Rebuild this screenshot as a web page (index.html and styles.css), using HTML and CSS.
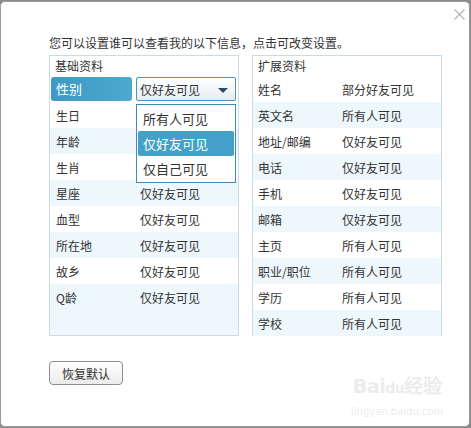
FILE: index.html
```html
<!DOCTYPE html>
<html lang="zh-CN">
<head>
<meta charset="utf-8">
<title>隐私设置</title>
<link rel="stylesheet" href="styles.css">
</head>
<body>
<div class="dialog">
  <svg class="close" width="11" height="11" viewBox="0 0 11 11"><path d="M0.5 0.5 L10.5 10.5 M10.5 0.5 L0.5 10.5" stroke="#b8b8b8" stroke-width="1.3" fill="none"/></svg>
  <div class="content">
    <p class="intro">您可以设置谁可以查看我的以下信息，点击可改变设置。</p>
    <div class="panels">
      <div class="panel panel-left">
        <div class="head">基础资料</div>
        <div class="row selected">
          <div class="label-box">性别</div>
          <div class="select">
            <span>仅好友可见</span>
            <span class="arrow"></span>
          </div>
        </div>
        <div class="row"><span class="k">生日</span><span class="v"></span></div>
        <div class="row alt"><span class="k">年龄</span><span class="v"></span></div>
        <div class="row"><span class="k">生肖</span><span class="v"></span></div>
        <div class="row alt"><span class="k">星座</span><span class="v">仅好友可见</span></div>
        <div class="row"><span class="k">血型</span><span class="v">仅好友可见</span></div>
        <div class="row alt"><span class="k">所在地</span><span class="v">仅好友可见</span></div>
        <div class="row"><span class="k">故乡</span><span class="v">仅好友可见</span></div>
        <div class="row alt"><span class="k">Q龄</span><span class="v">仅好友可见</span></div>
        <ul class="dropdown">
          <li>所有人可见</li>
          <li class="active">仅好友可见</li>
          <li>仅自己可见</li>
        </ul>
      </div>
      <div class="panel panel-right">
        <div class="head">扩展资料</div>
        <div class="row"><span class="k">姓名</span><span class="v">部分好友可见</span></div>
        <div class="row alt"><span class="k">英文名</span><span class="v">所有人可见</span></div>
        <div class="row"><span class="k">地址/邮编</span><span class="v">仅好友可见</span></div>
        <div class="row alt"><span class="k">电话</span><span class="v">仅好友可见</span></div>
        <div class="row"><span class="k">手机</span><span class="v">仅好友可见</span></div>
        <div class="row alt"><span class="k">邮箱</span><span class="v">仅好友可见</span></div>
        <div class="row"><span class="k">主页</span><span class="v">所有人可见</span></div>
        <div class="row alt"><span class="k">职业/职位</span><span class="v">所有人可见</span></div>
        <div class="row"><span class="k">学历</span><span class="v">所有人可见</span></div>
        <div class="row alt"><span class="k">学校</span><span class="v">所有人可见</span></div>
      </div>
    </div>
    <button class="reset">恢复默认</button>
  </div>
  <div class="watermark">
    <div class="wm-logo">Bai<span class="wm-du">du</span>经验</div>
    <div class="wm-url">jingyan.baidu.com</div>
  </div>
</div>
</body>
</html>
```
FILE: styles.css
```css
html, body {
  margin: 0;
  padding: 0;
}
body {
  background: #8c8c8c;
  width: 471px;
  height: 428px;
  padding: 1px 1px 0 0;
  box-sizing: border-box;
  font-family: "Noto Sans CJK SC", "Noto Sans", sans-serif;
  font-size: 12px;
  color: #333;
  overflow: hidden;
}
.dialog {
  position: relative;
  height: 426px;
  background: #fff;
  border: 1px solid #9a9a9a;
  border-radius: 5px;
  box-sizing: border-box;
}
.close {
  position: absolute;
  right: 4px;
  top: 7px;
}
.content {
  padding: 33px 0 0 48px;
}
.intro {
  margin: 0 0 4px 0;
  line-height: 16px;
  height: 16px;
  color: #333;
}
.panels {
  display: flex;
  gap: 13px;
}
.panel {
  position: relative;
  width: 190px;
  height: 281px;
  border: 1px solid #c9dbe7;
  box-sizing: border-box;
  background: #edf7fc;
}
.head {
  height: 20px;
  line-height: 20px;
  padding-left: 5px;
  background: #fff;
}
.row {
  display: flex;
  align-items: center;
  height: 26px;
  background: #fff;
}
.row.alt {
  background: #edf7fc;
}
.k {
  width: 84px;
  padding-left: 6px;
  flex: none;
}
.panel-right .k {
  width: 84px;
  padding-left: 5px;
}
.label-box {
  margin-left: 1px;
  width: 81px;
  height: 24px;
  line-height: 24px;
  padding-left: 5px;
  box-sizing: border-box;
  border-radius: 3px;
  background: linear-gradient(to right, #3e99c4, #4ea8cf);
  color: #fff;
  font-size: 13px;
  flex: none;
}
.select {
  margin-left: 4px;
  width: 100px;
  height: 24px;
  box-sizing: border-box;
  border: 1px solid #4b95c6;
  border-radius: 2px;
  background: linear-gradient(to bottom, #ffffff, #e6ecf1);
  display: flex;
  align-items: center;
  justify-content: space-between;
  padding: 0 7px 0 3px;
}
.arrow {
  width: 0;
  height: 0;
  border-left: 5px solid transparent;
  border-right: 5px solid transparent;
  border-top: 5px solid #2c4a66;
  margin-top: 2px;
}
.dropdown {
  position: absolute;
  left: 86px;
  top: 48px;
  width: 100px;
  height: 79px;
  margin: 0;
  padding: 1px 1px;
  list-style: none;
  box-sizing: border-box;
  border: 1px solid #3e8abd;
  background: #fff;
  font-size: 13px;
}
.dropdown li {
  height: 25px;
  line-height: 25px;
  padding-left: 5px;
}
.dropdown li.active {
  background: #44a0c8;
  color: #fff;
  border-radius: 2px;
}
.reset {
  margin-top: 25px;
  width: 74px;
  height: 24px;
  border: 1px solid #8e8e8e;
  border-radius: 4px;
  background: linear-gradient(to bottom, #ffffff, #ebebeb);
  font-family: "Noto Sans CJK SC", sans-serif;
  font-size: 12px;
  color: #333;
  padding: 0;
}
.watermark {
  position: absolute;
  left: 350px;
  top: 371px;
  color: #ececec;
  font-family: "DejaVu Sans", sans-serif;
  text-align: center;
  width: 92px;
}
.wm-logo {
  font-size: 19px;
  font-weight: bold;
  line-height: 26px;
  letter-spacing: -0.5px;
}
.wm-du {
  font-size: 14px;
}
.wm-url {
  font-size: 10px;
  line-height: 14px;
  margin-top: 4px;
}
```
